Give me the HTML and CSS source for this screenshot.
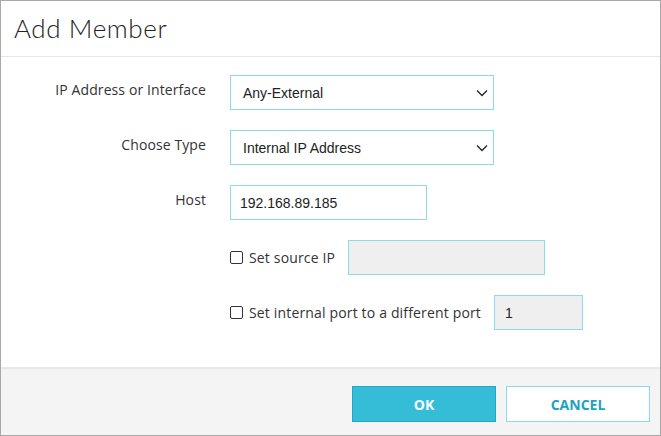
FILE: index.html
```html
<!DOCTYPE html>
<html>
<head>
<meta charset="utf-8">
<link rel="stylesheet" href="styles.css">
</head>
<body>
<div class="dialog">
  <div class="header"><h1 class="title">Add Member</h1></div>
  <div class="body">
    <div class="row">
      <div class="label">IP Address or Interface</div>
      <div class="select wide"><span>Any-External</span>
        <svg class="chev" width="12" height="8" viewBox="0 0 12 8"><path d="M1 1.5 L6 6.5 L11 1.5" fill="none" stroke="#222" stroke-width="1.3"/></svg>
      </div>
    </div>
    <div class="row">
      <div class="label">Choose Type</div>
      <div class="select wide"><span>Internal IP Address</span>
        <svg class="chev" width="12" height="8" viewBox="0 0 12 8"><path d="M1 1.5 L6 6.5 L11 1.5" fill="none" stroke="#222" stroke-width="1.3"/></svg>
      </div>
    </div>
    <div class="row">
      <div class="label">Host</div>
      <div class="input host">192.168.89.185</div>
    </div>
    <div class="row">
      <div class="label"></div>
      <label class="check"><span class="box"></span><span class="ctext">Set source IP</span></label>
      <div class="input disabled src"></div>
    </div>
    <div class="row">
      <div class="label"></div>
      <label class="check"><span class="box"></span><span class="ctext">Set internal port to a different port</span></label>
      <div class="input disabled port">1</div>
    </div>
  </div>
  <div class="footer">
    <button class="btn ok">OK</button>
    <button class="btn cancel">CANCEL</button>
  </div>
</div>
</body>
</html>
```
FILE: styles.css
```css
html, body { margin: 0; padding: 0; background: #fff; }
.dialog {
  width: 661px; height: 436px; box-sizing: border-box;
  border: 1px solid #a8a8a8;
  display: flex; flex-direction: column;
  font-family: "Open Sans", sans-serif;
  color: #333;
}
.header {
  height: 56px; box-sizing: border-box; border-bottom: 1px solid #e6e6e6;
  display: flex; align-items: center; padding-left: 13px; flex: none;
}
.title {
  margin: 0; font-family: Lato, sans-serif; font-weight: 300;
  font-size: 26px; color: #222; letter-spacing: 0.6px;
  position: relative; top: -1px;
}
.body {
  flex: 1; padding-top: 18px;
  display: flex; flex-direction: column; gap: 20px;
}
.row { display: flex; align-items: center; height: 35px; }
.label {
  width: 205px; margin-right: 24px; text-align: right;
  font-size: 14px; color: #333; position: relative; top: -3px;
  letter-spacing: 0.1px;
}
.select, .input {
  height: 35px; box-sizing: border-box;
  border: 1px solid #8ed9ea; background: #fff;
  font-family: "Liberation Sans", Arial, sans-serif; font-size: 14px; color: #222;
  display: flex; align-items: center;
}
.select.wide { width: 264px; padding: 0 5px 0 12px; justify-content: space-between; }
.chev { display: block; }
.input.host { width: 197px; padding-left: 9px; }
.input.disabled { background: #efefef; }
.input.src { width: 197px; margin-left: 13px; }
.input.port { width: 89px; margin-left: 13px; padding-left: 10px; }
.check { display: flex; align-items: center; font-size: 14px; color: #333; }
.box {
  width: 13px; height: 13px; box-sizing: border-box;
  border: 1.5px solid #333; border-radius: 2px; background: #fff;
  margin-right: 6px;
}
.ctext { letter-spacing: 0.16px; }
.footer {
  height: 68px; box-sizing: border-box; flex: none;
  border-top: 2px solid #e8e8e8; background: #f4f4f4;
  display: flex; justify-content: flex-end; align-items: flex-start;
  padding: 17px 10px 0 0; gap: 10px;
}
.btn {
  width: 144px; height: 36px; box-sizing: border-box;
  font-family: "Open Sans", sans-serif; font-weight: 700; font-size: 14px;
  margin: 0; cursor: pointer;
}
.ok { background: #35bdd7; border: 1px solid #20a9c4; color: #fff; }
.cancel { background: #fff; border: 1px solid #8ed9ea; color: #1ca3c0; }
```
